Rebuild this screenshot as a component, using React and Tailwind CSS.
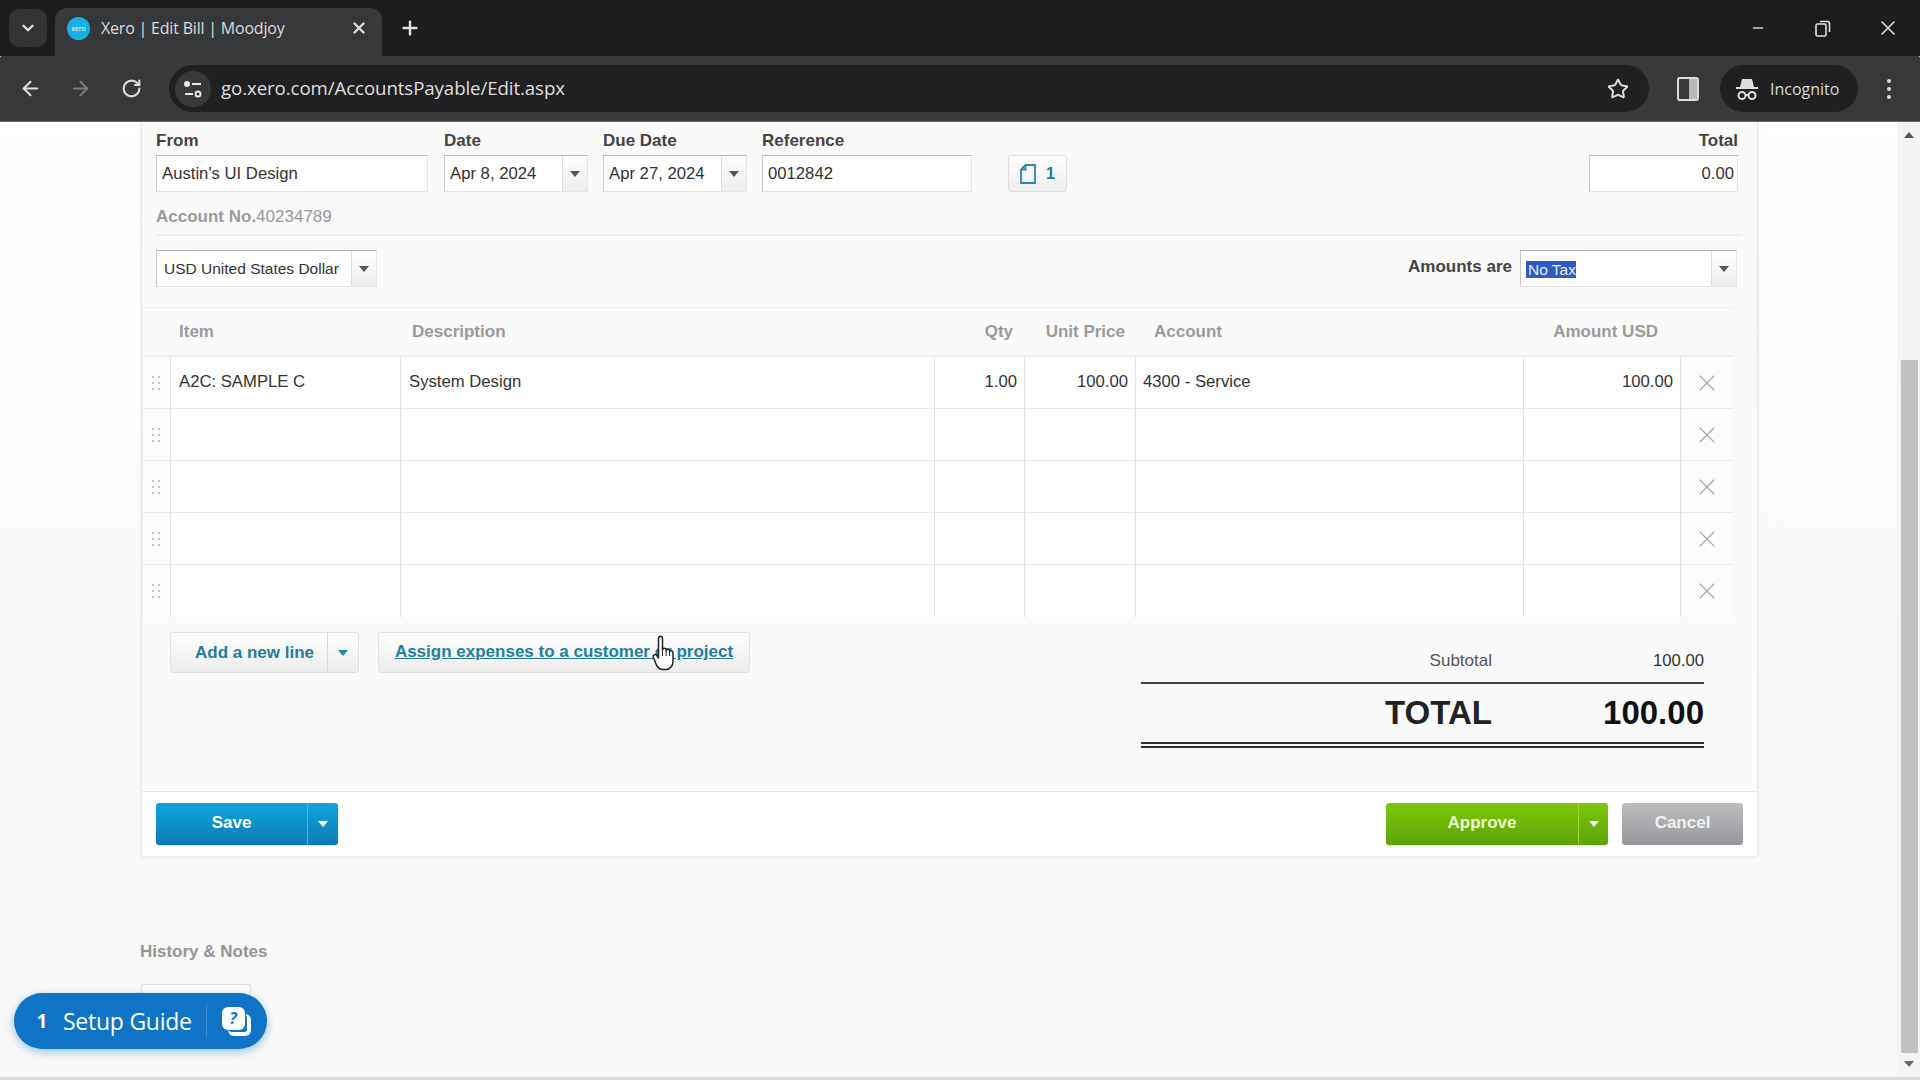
import React from "react";
import { ArrowLeft, ArrowRight, RotateCw, Star, Minus, X, Plus, ChevronDown } from "lucide-react";

const Caret = ({ c = "border-t-[#555]" }) => (
  <span className={`block w-0 h-0 border-x-[5px] border-x-transparent border-t-[6px] ${c}`} />
);

const Label = ({ children, className = "" }) => (
  <div className={`text-[17px] leading-[18px] font-bold text-[#444] mt-[1px] mb-[5px] ${className}`}>{children}</div>
);

const Input = ({ children, className = "" }) => (
  <div className={`h-[37px] bg-white border border-[#e4e4e4] border-t-[#b4b4b4] border-l-[#c8c8c8] flex items-center px-[5px] pt-[1px] text-[16.7px] text-[#333] ${className}`}>
    {children}
  </div>
);

const SelectBox = ({ w, children, h = "h-[37px]", btn = "w-[25px]" }) => (
  <div className={`${w} ${h} flex bg-white border border-[#e4e4e4] border-t-[#b4b4b4] border-l-[#c8c8c8] text-[16.7px] text-[#333]`}>
    <div className="flex-1 flex items-center px-[5px] pt-[1px] whitespace-nowrap overflow-hidden">{children}</div>
    <div className={`${btn} flex items-center justify-center border-l border-[#dcdcdc] bg-linear-to-b from-white to-[#ececec]`}>
      <Caret />
    </div>
  </div>
);

const COLS = "grid grid-cols-[28px_230px_534px_90px_111px_388px_157px_53px]";

const Dots = () => (
  <svg width="10" height="16" viewBox="0 0 10 16" className="fill-[#c4c4c4]">
    {[1, 7, 13].map((y) => (
      <g key={y}>
        <rect x="1" y={y} width="2" height="2" />
        <rect x="7" y={y} width="2" height="2" />
      </g>
    ))}
  </svg>
);

const Row = ({ item, desc, qty, price, account, amount, last }) => (
  <div className={`${COLS} h-[52px] text-[16.7px] text-[#333] ${last ? "" : "border-b border-[#eaeaea]"}`}>
    <div className="flex items-center justify-center pr-[2px] bg-[#fbfbfb] border-r border-[#e2e2e2]"><Dots /></div>
    <div className="bg-white border-r border-[#e2e2e2] flex items-center pl-[8px] pb-[2px]">{item}</div>
    <div className="bg-white border-r border-[#e2e2e2] flex items-center pl-[8px] pb-[2px]">{desc}</div>
    <div className="bg-white border-r border-[#e2e2e2] flex items-center justify-end pr-[7px] pb-[2px]">{qty}</div>
    <div className="bg-white border-r border-[#e2e2e2] flex items-center justify-end pr-[7px] pb-[2px]">{price}</div>
    <div className="bg-white border-r border-[#e2e2e2] flex items-center pl-[7px] pb-[2px]">{account}</div>
    <div className="bg-white border-r border-[#e2e2e2] flex items-center justify-end pr-[7px] pb-[2px]">{amount}</div>
    <div className="bg-[#fdfdfd] flex items-center justify-center pr-[2px]">
      <X size={28} strokeWidth={1} className="text-[#a9a9a9]" />
    </div>
  </div>
);

const Hand = () => (
  <svg width="24" height="36" viewBox="0 0 24 36" className="absolute left-[652px] top-[635px]">
    <path
      d="M6.5 3.5c0-3 4-3 4 0V15c0-2.5 3.6-2.5 3.6 0v1c0-2.3 3.5-2.3 3.5 0v1.2c0-2 3.4-2 3.4.3V26c0 4.5-2.6 8.5-7.5 8.5h-2.500c-3 0-4.800-1.500-6.300-4L1.400 22.500c-1.200-2.400 2-4.200 3.400-2l1.700 2.500z"
      fill="#fff"
      stroke="#222"
      strokeWidth="1.500"
      strokeLinejoin="round"
    />
    <path d="M10.500 15v6M14.100 16v5M17.600 17v4" stroke="#222" strokeWidth="1" fill="none" />
  </svg>
);

export default function App() {
  return (
    <div className="relative w-[1920px] h-[1080px] overflow-hidden flex flex-col bg-[#f8f8f8] font-['Liberation_Sans',Arial,sans-serif]">
      {/* Tab strip */}
      <div className="h-[56px] shrink-0 bg-[#1d1d1f] flex items-end font-['Open_Sans','Noto_Sans',sans-serif]">
        <div className="w-[38px] h-[38px] ml-[9px] mb-[9px] rounded-[10px] bg-[#323335] flex items-center justify-center text-[#e6e6e6]">
          <ChevronDown size={18} strokeWidth={3} />
        </div>
        <div className="ml-[8px] w-[327px] h-[48px] rounded-t-[12px] bg-[#37383a] flex items-center pl-[12px] pr-[14px] pb-[8px] text-[#dcdcdc]">
          <span className="w-[23px] h-[23px] rounded-full bg-[#17b2e4] flex items-center justify-center text-[7px] leading-none text-white shrink-0">xero</span>
          <span className="ml-[11px] flex-1 text-[16px] tracking-[-0.2px] whitespace-nowrap">Xero | Edit Bill | Moodjoy</span>
          <X size={18} strokeWidth={3} className="text-[#dedede]" />
        </div>
        <div className="ml-[17px] mb-[17px] text-[#e2e2e2]"><Plus size={22} strokeWidth={2.6} /></div>
        <div className="ml-auto flex items-center h-full text-[#e0e0e0]">
          <div className="w-[65px] flex justify-center"><Minus size={16} strokeWidth={2} className="text-[#d0d0d0]" /></div>
          <div className="w-[65px] flex justify-center">
            <svg width="16" height="18" viewBox="0 0 16 18" fill="none" stroke="#e0e0e0" strokeWidth="1.600">
              <rect x="1" y="5" width="10" height="12" rx="1.500" />
              <path d="M5 2.500h7.500a2 2 0 0 1 2 2V13" />
            </svg>
          </div>
          <div className="w-[65px] flex justify-center"><X size={24} strokeWidth={1.5} /></div>
        </div>
      </div>

      {/* Toolbar */}
      <div className="h-[66px] shrink-0 bg-[#37383a] flex items-center rounded-t-[2px] border-b border-[#6b6b6b] font-['Open_Sans','Noto_Sans',sans-serif]">
        <div className="w-[169px] flex items-center text-[#dcdcdc] shrink-0">
          <ArrowLeft size={23} strokeWidth={2.2} className="ml-[19px]" />
          <ArrowRight size={23} strokeWidth={2.2} className="ml-[27px] text-[#7a7a7a]" />
          <RotateCw size={21} strokeWidth={2.4} className="ml-[29px]" />
        </div>
        <div className="w-[1480px] h-[47px] rounded-full bg-[#202022] flex items-center">
          <div className="w-[36px] h-[36px] ml-[6px] rounded-full bg-[#37383a] flex items-center justify-center">
            <svg width="20" height="18" viewBox="0 0 20 18" fill="none" stroke="#e6e6e6" strokeWidth="2">
              <circle cx="4" cy="4" r="2" fill="#e6e6e6" />
              <path d="M9 4h9M2 14h8" />
              <circle cx="15" cy="14" r="2.500" />
            </svg>
          </div>
          <span className="ml-[10px] text-[18.7px] text-[#dedede] tracking-[-0.1px]">go.xero.com/AccountsPayable/Edit.aspx</span>
          <Star size={22} strokeWidth={2.1} className="ml-auto mr-[20px] text-[#e0e0e0]" />
        </div>
        <div className="w-[71px] flex justify-center shrink-0 pl-[6px]">
          <svg width="22" height="24" viewBox="0 0 22 24">
            <rect x="1" y="1" width="20" height="22" rx="2" fill="none" stroke="#dcdcdc" strokeWidth="2" />
            <rect x="12" y="2" width="8" height="20" fill="#b8b8b8" />
          </svg>
        </div>
        <div className="w-[138px] h-[47px] rounded-full bg-[#202022] flex items-center pl-[16px] shrink-0">
          <svg width="22" height="24" viewBox="0 0 22 24" fill="none" stroke="#dcdcdc" strokeWidth="2">
            <path d="M6 2h10l2 8H4z" fill="#dcdcdc" stroke="none" />
            <path d="M0 11h22" />
            <circle cx="6" cy="18.500" r="3.500" />
            <circle cx="16" cy="18.500" r="3.500" />
            <path d="M9.500 18h3" />
          </svg>
          <span className="ml-[12px] text-[16px] text-[#d8d8d8]">Incognito</span>
        </div>
        <div className="flex-1 flex flex-col items-center gap-[4px]">
          <span className="w-[4px] h-[4px] rounded-full bg-[#dcdcdc]" />
          <span className="w-[4px] h-[4px] rounded-full bg-[#dcdcdc]" />
          <span className="w-[4px] h-[4px] rounded-full bg-[#dcdcdc]" />
        </div>
      </div>

      {/* Page + scrollbar */}
      <div className="flex-1 min-h-0 flex">
        <div className="flex-1 min-w-0 overflow-hidden bg-linear-to-b from-white to-[#f8f8f8] to-[60%]">
          <div className="ml-[141px] w-[1617px] bg-[#fafafa] border-x border-[#e6e6e6] pl-[14px] pr-[19px] pt-[9px] shadow-[0_1px_3px_rgba(0,0,0,0.08)]">
            {/* Fields */}
            <div className="flex">
              <div className="w-[272px]">
                <Label>From</Label>
                <Input>Austin's UI Design</Input>
              </div>
              <div className="ml-[16px] w-[144px]">
                <Label>Date</Label>
                <SelectBox w="w-full">Apr 8, 2024</SelectBox>
              </div>
              <div className="ml-[15px] w-[144px]">
                <Label>Due Date</Label>
                <SelectBox w="w-full">Apr 27, 2024</SelectBox>
              </div>
              <div className="ml-[15px] w-[210px]">
                <Label>Reference</Label>
                <Input>0012842</Input>
              </div>
              <div className="ml-[36px] mt-[24px]">
                <div className="w-[59px] h-[37px] rounded-[3px] border border-[#dedede] bg-linear-to-b from-white to-[#ededed] flex items-center justify-center gap-[10px] text-[#1c7f9c] text-[16px] font-bold">
                  <svg width="16" height="20" viewBox="0 0 16 20" fill="none" stroke="#2a87a3" strokeWidth="1.800">
                    <path d="M5.500 1H15v18H1V5.500z" />
                    <path d="M5.500 1v4.500H1" />
                  </svg>
                  1
                </div>
              </div>
              <div className="ml-auto w-[149px]">
                <Label className="text-right">Total</Label>
                <Input className="justify-end pr-[3px]">0.00</Input>
              </div>
            </div>

            <div className="mt-[14px] h-[20px] leading-[20px] text-[17px] text-[#999] pt-[1px]">
              <span className="font-bold text-[#9a9a9a]">Account No.</span>40234789
            </div>
            <div className="mt-[8px] mr-[-4px] border-b-2 border-[#efefef]" />

            {/* Currency / Amounts are */}
            <div className="mt-[14px] flex items-center">
              <SelectBox w="w-[221px]" btn="w-[25px]">
                <span className="pl-[2px] text-[15.5px]">USD United States Dollar</span>
              </SelectBox>
              <div className="ml-auto mr-[8px] text-[17px] font-bold text-[#444] mt-[-4px]">Amounts are</div>
              <div className="mr-[1px]">
                <SelectBox w="w-[217px]" btn="w-[25px]">
                  <span className="pl-[2px] text-[15.5px] leading-[17px] bg-[#2f5cc2] text-[#e8eefc]">No Tax</span>
                </SelectBox>
              </div>
            </div>

            {/* Table */}
            <div className="mt-[20px] ml-[-14px] w-[1591px] border-l border-[#ededed] bg-[#fafafa]">
              <div className={`${COLS} h-[50px] items-center border-t border-b-2 border-[#efefef] text-[17px] font-bold text-[#9b9b9b]`}>
                <div />
                <div className="pl-[8px]">Item</div>
                <div className="pl-[11px]">Description</div>
                <div className="text-right pr-[12px]">Qty</div>
                <div className="text-right pr-[11px]">Unit Price</div>
                <div className="pl-[18px]">Account</div>
                <div className="text-right pr-[23px] whitespace-nowrap">Amount USD</div>
                <div />
              </div>
              <Row item="A2C: SAMPLE C" desc="System Design" qty="1.00" price="100.00" account="4300 - Service" amount="100.00" />
              <Row />
              <Row />
              <Row />
              <Row last />
            </div>

            {/* Buttons and totals */}
            <div className="flex h-[174px]">
              <div className="pt-[15px] pl-[14px] flex items-start">
                <div className="w-[189px] h-[41px] flex rounded-[3px] border border-[#e0e0e0] bg-linear-to-b from-white to-[#ececec] text-[#1f7f9d] text-[17px] font-bold">
                  <div className="flex-1 flex items-center pl-[24px]">Add a new line</div>
                  <div className="w-[31px] flex items-center justify-center border-l border-[#d8d8d8]"><Caret c="border-t-[#2a87a3]" /></div>
                </div>
                <div className="ml-[19px] w-[372px] h-[41px] rounded-[3px] border border-[#e0e0e0] bg-linear-to-b from-white to-[#ececec] flex items-center justify-center pb-[2px] text-[#1f7f9d] text-[17px] font-bold underline">
                  Assign expenses to a customer or project
                </div>
              </div>
              <div className="ml-[391px] w-[563px] pt-[34px] text-right">
                <div className="flex h-[20px] items-center justify-end text-[17px] text-[#555]">
                  <span className="mb-[1px]">Subtotal</span>
                  <span className="w-[212px] text-[16.7px] text-[#333]">100.00</span>
                </div>
                <div className="mt-[11px] border-b-2 border-[#444]" />
                <div className="flex h-[58px] items-center justify-end font-bold text-[#222]">
                  <span className="text-[33px]">TOTAL</span>
                  <span className="w-[212px] text-[33px] text-[#111]">100.00</span>
                </div>
                <div className="h-[6px] border-y-2 border-[#333]" />
              </div>
            </div>

            {/* Footer */}
            <div className="ml-[-14px] mr-[-19px] h-[65px] bg-white border-t border-[#e6e6e6] pt-[11px] pl-[14px] pr-[14px] flex items-start text-[17px] font-bold">
              <div className="w-[182px] h-[42px] rounded-[3px] flex text-white bg-linear-to-b from-[#12a5de] to-[#0a7bb4] shadow-[0_1px_0_#bfe6f5]">
                <div className="flex-1 flex items-center justify-center pb-[2px]">Save</div>
                <div className="w-[31px] flex items-center justify-center border-l border-[#4fb3dc]"><Caret c="border-t-white" /></div>
              </div>
              <div className="ml-auto w-[222px] h-[42px] rounded-[3px] flex text-[#ecffd0] bg-linear-to-b from-[#7cc80a] to-[#5ea302] shadow-[0_1px_0_#dff5a8]">
                <div className="flex-1 flex items-center justify-center pb-[2px]">Approve</div>
                <div className="w-[30px] flex items-center justify-center border-l border-[#9bd544]"><Caret c="border-t-white" /></div>
              </div>
              <div className="ml-[14px] w-[121px] h-[42px] rounded-[3px] flex items-center justify-center pb-[2px] text-[#f2f2f2] bg-linear-to-b from-[#bcbdbf] to-[#97989b]">Cancel</div>
            </div>
          </div>

          <div className="ml-[140px] mt-[86px] h-[20px] leading-[20px] text-[17px] font-bold text-[#959595]">History &amp; Notes</div>
          <div className="ml-[141px] mt-[22px] w-[110px] h-[40px] border border-[#dcdcdc] rounded-[2px] bg-[#fbfbfb]" />
        </div>

        {/* Scrollbar */}
        <div className="w-[23px] shrink-0 bg-[#f3f3f3] flex flex-col items-center pl-[1px]">
          <span className="mt-[10px] block w-0 h-0 border-x-[5px] border-x-transparent border-b-[6px] border-b-[#555]" />
          <div className="mt-[222px] w-[17px] h-[693px] bg-[#c1c1c1]" />
          <span className="mt-[8px] block w-0 h-0 border-x-[5px] border-x-transparent border-t-[6px] border-t-[#6a6a6a]" />
        </div>
      </div>
      <div className="h-[3px] shrink-0 bg-[#dcdcdc]" />

      {/* Setup Guide launcher */}
      <div className="absolute left-[14px] top-[993px] w-[253px] h-[56px] rounded-full bg-[#0f74c5] shadow-[0_3px_10px_rgba(15,116,197,0.4)] flex items-center text-white font-['Open_Sans','Noto_Sans',sans-serif]">
        <span className="ml-[18px] w-[20px] text-center text-[19px] font-bold">1</span>
        <span className="ml-[11px] text-[23px] font-medium tracking-[-0.25px] whitespace-nowrap">Setup Guide</span>
        <span className="ml-[14px] w-px h-[32px] bg-[#3b8fd3]" />
        <span className="ml-[15px] relative w-[29px] h-[29px]">
          <span className="absolute left-[6px] top-[7px] w-[23px] h-[22px] rounded-[6px] border-b-[4px] border-r-[4px] border-white" />
          <span className="absolute left-0 top-0 w-[23px] h-[23px] rounded-[6px] bg-white text-[#0f74c5] text-[16px] leading-[23px] font-bold italic text-center">?</span>
        </span>
      </div>

      <Hand />
    </div>
  );
}
